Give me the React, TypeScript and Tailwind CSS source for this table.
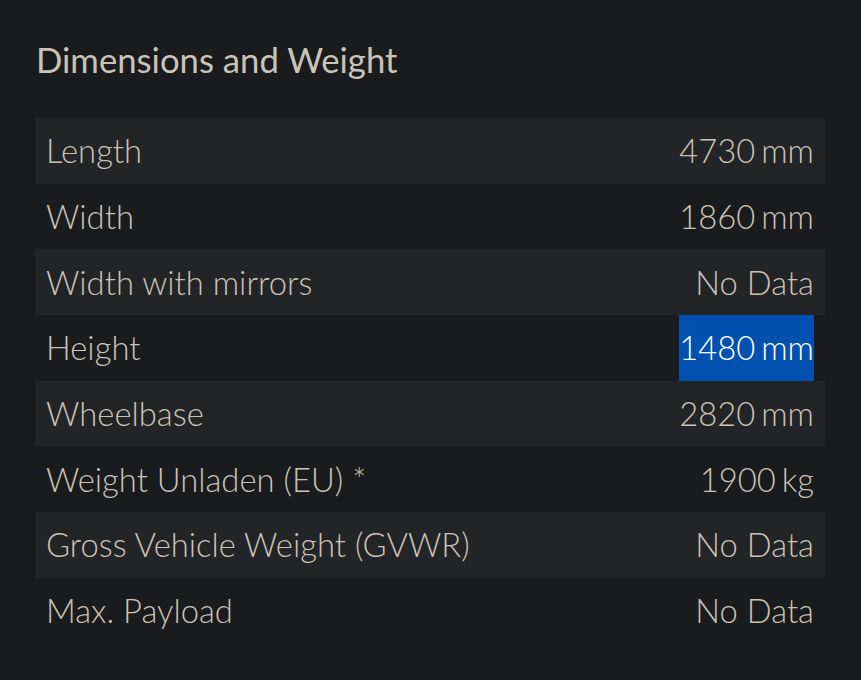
const rows: [string, string][] = [
  ['Length', '4730 mm'],
  ['Width', '1860 mm'],
  ['Width with mirrors', 'No Data'],
  ['Height', '1480 mm'],
  ['Wheelbase', '2820 mm'],
  ['Weight Unladen (EU) *', '1900 kg'],
  ['Gross Vehicle Weight (GVWR)', 'No Data'],
  ['Max. Payload', 'No Data'],
]

export default function App() {
  return (
    <div className="w-[861px] h-[680px] overflow-hidden bg-[#1a1b1d] px-[35px] pt-[38px] font-['Lato',sans-serif] text-[#c9c3ba]">
      <h2 className="text-[34.7px] leading-[44px] font-normal pl-[1px]">Dimensions and Weight</h2>

      <div className="mt-[36px] w-[790px] flex flex-col">
        {rows.map(([label, value], i) => (
          <div
            key={label}
            className={`flex justify-between items-center h-[65.7px] pl-[11px] pr-[11px] text-[32.8px] font-light ${i % 2 === 0 ? 'bg-[#232426]' : ''}`}
          >
            <span>{label}</span>
            {label === 'Height' ? (
              <span className="bg-[#0050b0] text-white leading-[65.7px] [word-spacing:-3px]">{value}</span>
            ) : value === 'No Data' ? (
              <span>{value}</span>
            ) : (
              <span className="[word-spacing:-3px]">{value}</span>
            )}
          </div>
        ))}
      </div>
    </div>
  )
}
